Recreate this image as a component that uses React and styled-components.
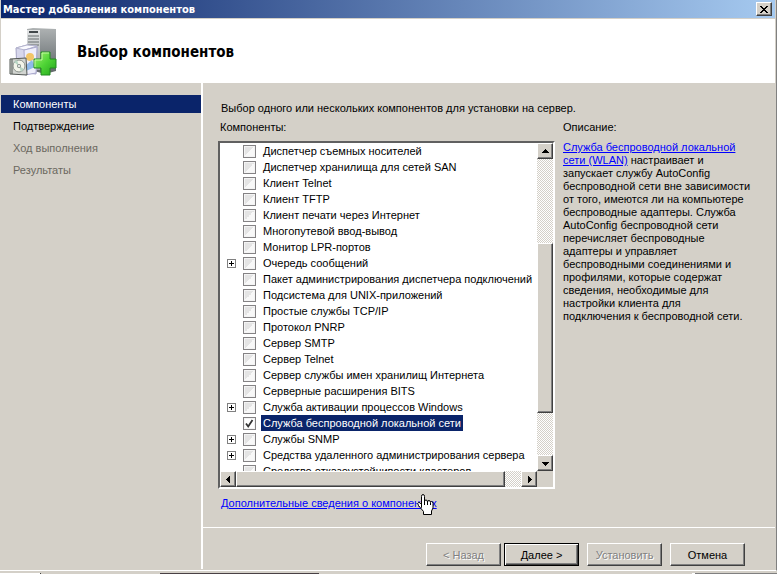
import styled, { createGlobalStyle, css } from 'styled-components'

const GlobalStyle = createGlobalStyle`
  * {
    box-sizing: border-box;
  }

  body {
    margin: 0;
    background: #d4d0c8;
    font-family: 'Liberation Sans', Arial, sans-serif;
    font-size: 11px;
    line-height: 16px;
    color: #000;
  }

  button, input {
    font: inherit;
    margin: 0;
    padding: 0;
  }
`;

const raised = css`
  border: 1px solid;
  border-color: #fff #404040 #404040 #fff;
  box-shadow: inset -1px -1px 0 #808080;
  background-color: #d4d0c8;
`;

const Page = styled.div`
  display: flex;
  flex-direction: column;
  height: 100vh;
  min-height: 420px;
`;

const Dialog = styled.div`
  display: flex;
  flex-direction: column;
  flex: 1;
  min-height: 0;
  padding: 0 1px;
  border-right: 1px solid #808080;
  border-bottom: 1px solid #fff;
`;

const TitleBar = styled.div`
  display: flex;
  justify-content: space-between;
  align-items: center;
  height: 18px;
  padding: 0 3px 0 2px;
  background: linear-gradient(to right, #0a246a, #a6caf0);
  color: #fff;
`;

const TitleText = styled.span`
  padding-top: 2px;
  font-family: 'DejaVu Sans Condensed', 'DejaVu Sans', sans-serif;
  font-weight: 700;
`;

const CloseButton = styled.button`
  ${raised}
  display: flex;
  align-items: center;
  justify-content: center;
  width: 16px;
  height: 14px;
`;

const Banner = styled.header`
  display: flex;
  align-items: center;
  gap: 20px;
  height: 64px;
  margin-top: 1px;
  padding: 2px 8px 0;
  background: #fff;
`;

const Heading = styled.h1`
  margin: 0;
  font-family: 'DejaVu Sans Condensed', 'DejaVu Sans', sans-serif;
  font-size: 15px;
  line-height: 20px;
  font-weight: 700;
`;

const Body = styled.div`
  display: flex;
  flex: 1;
  min-height: 0;
`;

const Steps = styled.nav`
  display: flex;
  flex-direction: column;
  gap: 4px;
  width: 200px;
  padding-top: 12px;
`;

const Step = styled.a`
  padding: 0 12px;
  line-height: 18px;
  text-decoration: none;
  color: ${p => (p.$current ? '#fff' : p.$disabled ? '#6b6860' : '#000')};
  background: ${p => (p.$current ? '#0a246a' : 'transparent')};
`;

const Main = styled.main`
  display: flex;
  flex-direction: column;
  flex: 1;
  min-width: 0;
  margin-bottom: 1px;
  border-left: 2px solid #fff;
`;

const Content = styled.div`
  display: flex;
  flex-direction: column;
  flex: 1;
  min-height: 0;
  padding: 17px 16px 16px 15px;
`;

const Intro = styled.p`
  margin: 0;
  padding-left: 3px;
`;

const Columns = styled.div`
  display: flex;
  flex: 1;
  gap: 8px;
  min-height: 0;
  padding-top: 3px;
`;

const ListColumn = styled.section`
  display: flex;
  flex-direction: column;
  flex: 1;
  min-width: 0;
`;

const Caption = styled.div`
  padding-left: ${p => (p.$indent ? '2px' : '0')};
  margin-bottom: 6px;
`;

const ListBox = styled.div`
  display: grid;
  grid-template-columns: minmax(0, 1fr) 16px;
  grid-template-rows: minmax(0, 1fr) 16px;
  flex: 1;
  min-height: 0;
  border: 2px solid;
  border-color: #606060 #fff #fff #606060;
  background: #d4d0c8;
`;

const List = styled.ul`
  margin: 0;
  padding: 0 0 0 7px;
  list-style: none;
  overflow: hidden;
  background: #fff;
`;

const Row = styled.li`
  display: flex;
  align-items: center;
  height: 16px;
  white-space: nowrap;
`;

const Slot = styled.span`
  display: flex;
  flex: none;
  width: 16px;
`;

const Expander = styled.button`
  display: flex;
  width: 9px;
  height: 9px;
  border: 1px solid #808080;
  background: #fff;
`;

const RowLabel = styled.label`
  display: flex;
  flex: none;
  align-items: center;
  gap: 5px;
`;

const Check = styled.input`
  appearance: none;
  width: 13px;
  height: 13px;
  border: 1px solid #848284;
  background: linear-gradient(135deg, #e4e4e4 50%, #f8f8f8 50%);
  box-shadow: inset 0 0 0 1px #f4f4f4;

  &:checked {
    background: #fff url("data:image/svg+xml,%3Csvg xmlns='http://www.w3.org/2000/svg' viewBox='0 0 11 11'%3E%3Cpath d='M2 5.5 4.2 8.5 8.5 2' fill='none' stroke='%23333' stroke-width='1.8'/%3E%3C/svg%3E");
  }
`;

const RowText = styled.span`
  padding: 0 2px;
  background: ${p => (p.$selected ? '#0a246a' : 'transparent')};
  color: ${p => (p.$selected ? '#fff' : '#000')};
`;

const ScrollBar = styled.div`
  display: flex;
  flex-direction: ${p => (p.$vertical ? 'column' : 'row')};
  background: repeating-conic-gradient(#fff 0 25%, #d4d0c8 0 50%) 0 0 / 2px 2px;
`;

const ScrollButton = styled.button`
  ${raised}
  display: flex;
  flex: none;
  align-items: center;
  justify-content: center;
  width: 16px;
  height: 16px;
`;

const Thumb = styled.div`
  ${raised}
  flex: ${p => p.$size};
`;

const Track = styled.div`
  flex: ${p => p.$size};
`;

const MoreInfo = styled.div`
  position: relative;
  align-self: flex-start;
  margin: 6px 0 0 3px;
`;

const Link = styled.a`
  color: #00f;
  text-decoration: underline;
`;

const Hand = styled.svg`
  position: absolute;
  top: -1px;
  left: 195px;
`;

const Description = styled.section`
  flex: none;
  width: 196px;
`;

const DescriptionText = styled.p`
  margin: 0;
  line-height: 13px;
  white-space: nowrap;
`;

const Footer = styled.footer`
  display: flex;
  justify-content: flex-end;
  gap: 8px;
  padding: 15px 30px 3px;
  border-top: 1px solid #fff;
`;

const ButtonPair = styled.div`
  display: flex;
  gap: 3px;
`;

const Button = styled.button`
  ${raised}
  width: 75px;
  height: 23px;
  color: #000;

  ${p => p.$primary && css`
    border-color: #000;
    box-shadow: inset 1px 1px 0 #fff, inset -1px -1px 0 #404040, inset -2px -2px 0 #808080;
  `}

  &:disabled {
    color: #808080;
    text-shadow: 1px 1px 0 #fff;
  }
`;

const Taskbar = styled.div`
  height: 1px;
  margin-top: 2px;
  background: linear-gradient(
    to right,
    #fff 40px, #404040 40px 41px, #d4d0c8 41px 160px, #484044 160px 319px,
    #d4d0c8 319px 692px, #fff 692px 695px, #808080 695px
  );
`;

const steps = [
  { title: 'Компоненты', current: true },
  { title: 'Подтверждение' },
  { title: 'Ход выполнения', disabled: true },
  { title: 'Результаты', disabled: true },
]

const features = [
  { name: 'Диспетчер съемных носителей' },
  { name: 'Диспетчер хранилища для сетей SAN' },
  { name: 'Клиент Telnet' },
  { name: 'Клиент TFTP' },
  { name: 'Клиент печати через Интернет' },
  { name: 'Многопутевой ввод-вывод' },
  { name: 'Монитор LPR-портов' },
  { name: 'Очередь сообщений', group: true },
  { name: 'Пакет администрирования диспетчера подключений' },
  { name: 'Подсистема для UNIX-приложений' },
  { name: 'Простые службы TCP/IP' },
  { name: 'Протокол PNRP' },
  { name: 'Сервер SMTP' },
  { name: 'Сервер Telnet' },
  { name: 'Сервер службы имен хранилищ Интернета' },
  { name: 'Серверные расширения BITS' },
  { name: 'Служба активации процессов Windows', group: true },
  { name: 'Служба беспроводной локальной сети', selected: true },
  { name: 'Службы SNMP', group: true },
  { name: 'Средства удаленного администрирования сервера', group: true },
  { name: 'Средство отказоустойчивости кластеров' },
]

const arrows = {
  up: 'M0 5h7v-1h-1v-1h-1v-1h-1v-1h-1v1h-1v1h-1v1h-1z',
  down: 'M0 2h7v1h-1v1h-1v1h-1v1h-1v-1h-1v-1h-1v-1h-1z',
  left: 'M5 0v7h-1v-1h-1v-1h-1v-1h-1v-1h1v-1h1v-1h1v-1z',
  right: 'M2 0v7h1v-1h1v-1h1v-1h1v-1h-1v-1h-1v-1h-1v-1z',
}

function Arrow({ direction, label }) {
  return (
    <ScrollButton aria-label={label}>
      <svg width="7" height="7" shapeRendering="crispEdges">
        <path d={arrows[direction]} />
      </svg>
    </ScrollButton>
  )
}

function ServerIcon() {
  return (
    <svg width="48" height="50" viewBox="0 0 48 50" aria-hidden="true">
      <defs>
        <linearGradient id="tower" x1="0" y1="0" x2="0" y2="1">
          <stop offset="0" stopColor="#aeb2b3" />
          <stop offset="0.6" stopColor="#7c8284" />
          <stop offset="1" stopColor="#606668" />
        </linearGradient>
        <linearGradient id="front" x1="0" y1="0" x2="0" y2="1">
          <stop offset="0" stopColor="#e2e4e5" />
          <stop offset="1" stopColor="#9ea3a5" />
        </linearGradient>
        <linearGradient id="plus" x1="0" y1="0" x2="1" y2="1">
          <stop offset="0" stopColor="#a4f070" />
          <stop offset="0.5" stopColor="#4fd436" />
          <stop offset="1" stopColor="#22a51a" />
        </linearGradient>
      </defs>
      <path d="M18 2 24 1 47 2V44L36 47 18 42z" fill="url(#tower)" />
      <path d="M18 3h13v40H18z" fill="url(#front)" />
      <path d="M20 4h9v2H20z" fill="#42484b" />
      <path d="M19 9h11M19 12h11M19 15h11M19 18h11" stroke="#686e71" />
      <path d="M7 21 18 18 28 19 27 47 8 45z" fill="#d7d7ec" stroke="#a5a4c5" />
      <path d="M7 21 18 18 28 19 16 23z" fill="#fafafe" stroke="#b5b5cf" />
      <path d="M15 23 28 20 27 46 16 48z" fill="#eeeefa" stroke="#aaa9ce" />
      <circle cx="21" cy="30" r="4" fill="#f1c568" />
      <path d="M17 38 23 33 26 40 17 44z" fill="#8eb9e9" />
      <path d="M1 32 17 31 18 48 1 47z" fill="#d2d5d1" stroke="#535855" />
      <path d="M3 32v15" stroke="#535855" />
      <circle cx="10" cy="39" r="6" fill="#f2f4e9" stroke="#8b918c" />
      <path d="M10 39 5 35 8 33zM10 39 15 42 12 45z" fill="#b7d5c4" />
      <circle cx="10" cy="39" r="2" fill="#858e89" />
      <circle cx="10" cy="39" r="1" fill="#fff" />
      <path d="M32 25h9v7h6v9h-6v7h-9v-7h-7v-9h7z" fill="url(#plus)" stroke="#238b20" strokeLinejoin="round" />
      <path d="M40 26h-7v7h-7v7" fill="none" stroke="#c2f9a2" />
    </svg>
  )
}

function HandCursor() {
  return (
    <Hand width="18" height="23" aria-hidden="true">
      <path
        d="M5.5 13.500V2.500q0-2 1.500-2t1.500 2v5q0-1.500 1.500-1.500t1.500 2q0-1.500 1.500-1.500t1.500 2q0-1 1.200-1t1.300 2v4.500l-1.500 3v3.500h-8v-3l-5-6q-1.500-2.500 0-3t3 2z"
        fill="#fff"
        stroke="#000"
      />
      <path d="M8.500 7v4M11.500 8v3M14.500 9v2" stroke="#000" />
    </Hand>
  )
}

function Feature({ name, group, selected }) {
  return (
    <Row>
      <Slot>
        {group && (
          <Expander aria-label={`Развернуть: ${name}`}>
            <svg width="7" height="7" shapeRendering="crispEdges">
              <path d="M1 3h5v1h-5zM3 1h1v5h-1z" />
            </svg>
          </Expander>
        )}
      </Slot>
      <RowLabel>
        <Check type="checkbox" defaultChecked={selected} />
        <RowText $selected={selected}>{name}</RowText>
      </RowLabel>
    </Row>
  )
}

export default function App() {
  return (
    <Page>
      <GlobalStyle />
      <Dialog>
        <TitleBar>
          <TitleText>Мастер добавления компонентов</TitleText>
          <CloseButton aria-label="Закрыть">
            <svg width="8" height="7" shapeRendering="crispEdges">
              <path d="M0 0h2v1h1v1h2v-1h1v-1h2v1h-1v1h-1v1h-1v1h1v1h1v1h1v1h-2v-1h-1v-1h-2v1h-1v1h-2v-1h1v-1h1v-1h1v-1h-1v-1h-1v-1h-1z" />
            </svg>
          </CloseButton>
        </TitleBar>
        <Banner>
          <ServerIcon />
          <Heading>Выбор компонентов</Heading>
        </Banner>
        <Body>
          <Steps>
            {steps.map(s => (
              <Step key={s.title} href="#" $current={s.current} $disabled={s.disabled}>{s.title}</Step>
            ))}
          </Steps>
          <Main>
            <Content>
              <Intro>Выбор одного или нескольких компонентов для установки на сервер.</Intro>
              <Columns>
                <ListColumn>
                  <Caption $indent>Компоненты:</Caption>
                  <ListBox>
                    <List>
                      {features.map(f => <Feature key={f.name} {...f} />)}
                    </List>
                    <ScrollBar $vertical>
                      <Arrow direction="up" label="Вверх" />
                      <Track $size={85} />
                      <Thumb $size={169} />
                      <Track $size={42} />
                      <Arrow direction="down" label="Вниз" />
                    </ScrollBar>
                    <ScrollBar>
                      <Arrow direction="left" label="Влево" />
                      <Thumb $size={269} />
                      <Track $size={16} />
                      <Arrow direction="right" label="Вправо" />
                    </ScrollBar>
                  </ListBox>
                  <MoreInfo>
                    <Link href="#">Дополнительные сведения о компонентах</Link>
                    <HandCursor />
                  </MoreInfo>
                </ListColumn>
                <Description>
                  <Caption>Описание:</Caption>
                  <DescriptionText>
                    <Link href="#">Служба беспроводной локальной<br />сети (WLAN)</Link> настраивает и<br />
                    запускает службу AutoConfig<br />
                    беспроводной сети вне зависимости<br />
                    от того, имеются ли на компьютере<br />
                    беспроводные адаптеры. Служба<br />
                    AutoConfig беспроводной сети<br />
                    перечисляет беспроводные<br />
                    адаптеры и управляет<br />
                    беспроводными соединениями и<br />
                    профилями, которые содержат<br />
                    сведения, необходимые для<br />
                    настройки клиента для<br />
                    подключения к беспроводной сети.
                  </DescriptionText>
                </Description>
              </Columns>
            </Content>
            <Footer>
              <ButtonPair>
                <Button disabled>&lt; Назад</Button>
                <Button $primary>Далее &gt;</Button>
              </ButtonPair>
              <Button disabled>Установить</Button>
              <Button>Отмена</Button>
            </Footer>
          </Main>
        </Body>
      </Dialog>
      <Taskbar />
    </Page>
  )
}
